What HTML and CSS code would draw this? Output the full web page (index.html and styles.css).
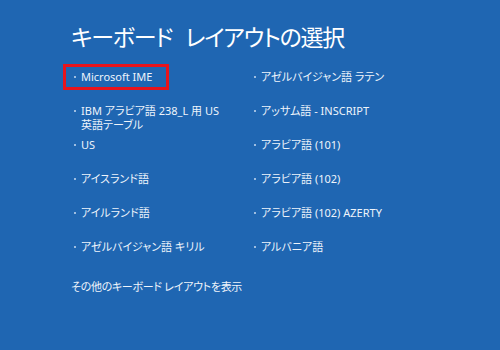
FILE: index.html
```html
<!DOCTYPE html>
<html lang="ja">
<head>
<meta charset="utf-8">
<title>キーボード レイアウトの選択</title>
<link rel="stylesheet" href="styles.css">
</head>
<body>
<main class="page">
  <h1 class="title">キーボード レイアウトの選択</h1>
  <ul class="layouts">
    <li class="item selected"><span class="dot"></span><span class="label">Microsoft IME</span></li>
    <li class="item"><span class="dot"></span><span class="label">IBM アラビア語 238_L 用 US 英語テーブル</span></li>
    <li class="item"><span class="dot"></span><span class="label">US</span></li>
    <li class="item"><span class="dot"></span><span class="label">アイスランド語</span></li>
    <li class="item"><span class="dot"></span><span class="label">アイルランド語</span></li>
    <li class="item"><span class="dot"></span><span class="label">アゼルバイジャン語 キリル</span></li>
    <li class="item"><span class="dot"></span><span class="label">アゼルバイジャン語 ラテン</span></li>
    <li class="item"><span class="dot"></span><span class="label">アッサム語 - INSCRIPT</span></li>
    <li class="item"><span class="dot"></span><span class="label">アラビア語 (101)</span></li>
    <li class="item"><span class="dot"></span><span class="label">アラビア語 (102)</span></li>
    <li class="item"><span class="dot"></span><span class="label">アラビア語 (102) AZERTY</span></li>
    <li class="item"><span class="dot"></span><span class="label">アルバニア語</span></li>
  </ul>
  <a class="more">その他のキーボード レイアウトを表示</a>
</main>
</body>
</html>
```

FILE: styles.css
```css
html, body {
  margin: 0;
  padding: 0;
  height: 100%;
}

body {
  background: #1f66b2;
  color: #eef4fb;
  font-family: "Noto Sans", "Noto Sans CJK JP", sans-serif;
  font-feature-settings: "palt";
}

.page {
  display: flex;
  flex-direction: column;
  align-items: flex-start;
  padding: 21px 0 0 63px;
}

.title {
  margin: 0 0 13px 8px;
  font-family: "Noto Sans CJK JP", sans-serif;
  font-feature-settings: "palt";
  font-weight: 400;
  font-size: 23px;
  line-height: 30px;
  letter-spacing: -1.2px;
  word-spacing: 9px;
  color: #ffffff;
}

.layouts {
  list-style: none;
  margin: 0;
  padding: 0;
  display: grid;
  grid-template-columns: 180px 180px;
  grid-template-rows: repeat(6, 26px);
  grid-auto-flow: column;
  row-gap: 8px;
}

.item {
  align-self: start;
  justify-self: start;
  display: flex;
  align-items: flex-start;
  gap: 5px;
  padding: 3px 14px 3px 8px;
  border: 3px solid transparent;
  font-size: 11px;
  line-height: 14px;
}

.item.selected {
  border-color: #e8141c;
}

.dot {
  flex: none;
  width: 2px;
  height: 2px;
  margin-top: 6px;
  border-radius: 1px;
  background: #c9dbf0;
}

.label {
  max-width: 140px;
}

.more {
  margin: 20px 0 0 8px;
  font-size: 11px;
  line-height: 14px;
  letter-spacing: -0.3px;
  color: #eef4fb;
}
```
